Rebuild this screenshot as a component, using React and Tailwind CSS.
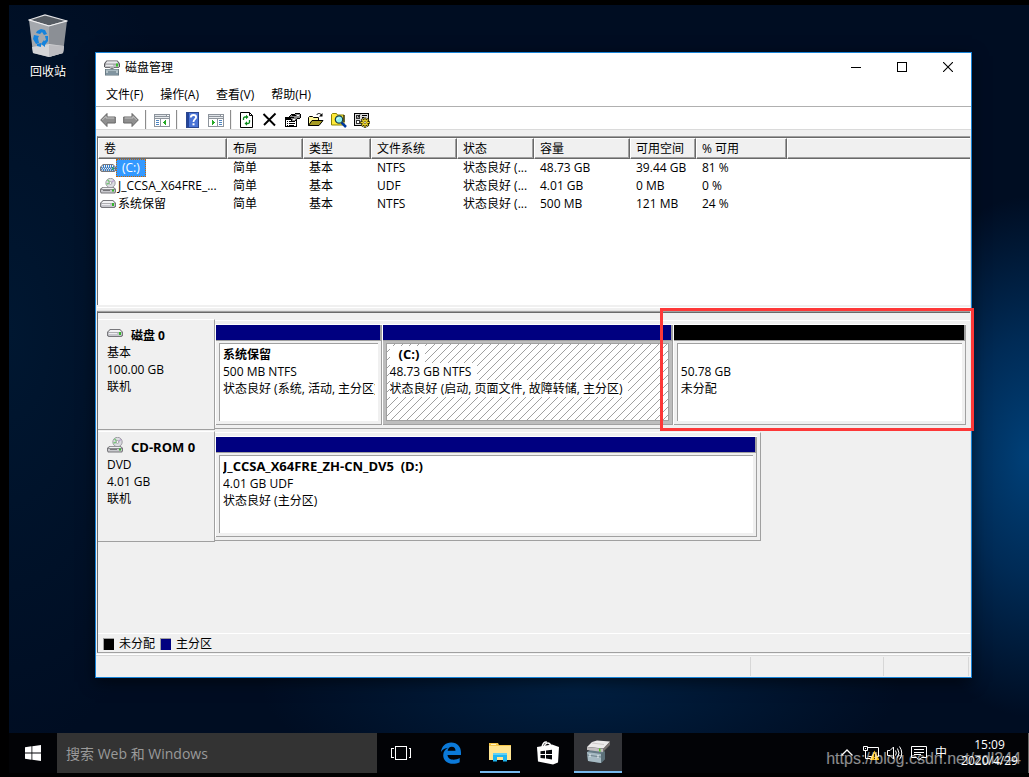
import React, { useState } from "react";

const volumes = [
  { icon: "hatched", name: "(C:)", layout: "简单", type: "基本", fs: "NTFS", status: "状态良好 (...", size: "48.73 GB", free: "39.44 GB", percent: "81 %" },
  { icon: "cd", name: "J_CCSA_X64FRE_...", layout: "简单", type: "基本", fs: "UDF", status: "状态良好 (...", size: "4.01 GB", free: "0 MB", percent: "0 %" },
  { icon: "disk", name: "系统保留", layout: "简单", type: "基本", fs: "NTFS", status: "状态良好 (...", size: "500 MB", free: "121 MB", percent: "24 %" },
];

const columns = [
  { label: "卷", width: "w-[129px]" },
  { label: "布局", width: "w-[76px]" },
  { label: "类型", width: "w-[68px]" },
  { label: "文件系统", width: "w-[86px]" },
  { label: "状态", width: "w-[77px]" },
  { label: "容量", width: "w-[96px]" },
  { label: "可用空间", width: "w-[66px]" },
  { label: "% 可用", width: "w-[91px]" },
];

const menus = ["文件(F)", "操作(A)", "查看(V)", "帮助(H)"];

function DiskIcon({ hatched }) {
  return (
    <svg className="h-4 w-4 shrink-0" viewBox="0 0 16 16">
      <path d="M3 4h10l3 3v3.5L14.500 12h-13L0 10.500V7z" fill="#77777b" />
      <path d="M3.300 5h9.400L15 7.200H1z" fill="#f2f2f4" />
      <path d="M1 7.500h14V10l-1 1H2l-1-1z" fill="#c6c6cc" />
      <path d="M2 8.500h8" stroke="#efeff2" />
      <rect x="12" y="7" width="2" height="3" fill="#35b52d" />
      {hatched && (
        <g stroke="#2f7fd0" strokeDasharray="1 1" shapeRendering="crispEdges">
          <path d="M3 5.500h10M1 7.500h14M1 9.500h14" />
          <path d="M2 6.500h12M1 8.500h15M2 10.500h12" strokeDashoffset="1" />
        </g>
      )}
    </svg>
  );
}

function CdIcon() {
  return (
    <svg className="h-4 w-4 shrink-0" viewBox="0 0 16 16">
      <circle cx="10.500" cy="5" r="4.700" fill="#dcdce2" stroke="#8b8b91" strokeWidth=".8" />
      <path d="M10.500 5L7.500 1.700M10.500 5l-4 1" stroke="#79c77a" strokeWidth="1.400" />
      <path d="M10.500 5l3.500-2.500" stroke="#b99bd0" strokeWidth="1.200" />
      <circle cx="10.500" cy="5" r="1.400" fill="#fff" stroke="#88888d" strokeWidth=".7" />
      <path d="M2.500 9h11l2.500 2v3l-1 1.500H1L0 14v-3z" fill="#77777b" />
      <path d="M3 9.800h10l1.500 1.300h-13z" fill="#efeff1" />
      <path d="M1 11.700h14v2l-.7.800H1.700L1 13.700z" fill="#c9c9ce" />
      <path d="M3 12.500h7" stroke="#77777b" />
      <rect x="12" y="11.500" width="2" height="2" fill="#35b52d" />
    </svg>
  );
}

function ManagementIcon({ className }) {
  return (
    <svg className={className} viewBox="0 0 16 16">
      <path d="M2.500.500h11L16 3.500v3L14.500 8h-13L0 6.500v-3z" fill="#58585c" />
      <path d="M3 1.300h10l1.800 2.400H1.200z" fill="#e9e9ec" />
      <path d="M1 4.300h14v2l-.9.900H1.900L1 6.300z" fill="#bfc0c4" />
      <path d="M2 5.300h7" stroke="#f5f5f6" />
      <rect x="12" y="3.500" width="2" height="3" fill="#39c02b" />
      <path d="M1 9h14v6.500H1z" fill="#5e7078" />
      <path d="M1.700 9.500h12.600v2H1.700z" fill="#a9bac2" />
      <path d="M1.700 12h12.600v3H1.700z" fill="#8094a0" />
      <path d="M3 11v2M13 11v2M6 9V8h4v1" stroke="#e9f0f2" />
    </svg>
  );
}

function TaskbarManagementIcon() {
  return (
    <svg className="h-6 w-6" viewBox="0 0 24 24">
      <path d="M1 12l3-2 14 1 1 8-4 4-13-2z" fill="#667b86" />
      <path d="M1 12l14 2v9L2 21z" fill="#a7bac3" />
      <path d="M15 14l4-3v8l-4 4z" fill="#5c7079" />
      <path d="M1 15l14 2" stroke="#6d818b" />
      <path d="M4 14v3M12 15v3" stroke="#e8eff2" />
      <path d="M6 2l5-1.500 13 1-6 7-17-1.500z" fill="#eceaea" />
      <path d="M1 7l16 1.700V12L1 10z" fill="#c3bfc0" />
      <path d="M17 8.700L24 1.500V5l-7 7z" fill="#77716f" />
      <path d="M6 3l12 1.500" stroke="#cfcaca" />
      <path d="M13 8.500l1.500.200v3L13 11.300z" fill="#4dc71d" />
    </svg>
  );
}

function ArrowIcon({ flip }) {
  return (
    <svg className={flip ? "h-4 w-4 -scale-x-100" : "h-4 w-4"} viewBox="0 0 16 16">
      <path d="M.700 8L7 1.500V5h8.300v6H7v3.500z" fill="#8f8f8f" stroke="#666" />
      <path d="M2.300 8L6 4.300V6h8.300" fill="none" stroke="#c4c4c4" />
    </svg>
  );
}

function PaneIcon({ right }) {
  return (
    <svg className="h-4 w-4" viewBox="0 0 16 16" shapeRendering="crispEdges">
      <rect x="0" y="2" width="16" height="13" fill="#8d949c" />
      <rect x="1" y="3" width="11" height="1" fill="#dfe3e8" />
      <rect x="13" y="3" width="2" height="1" fill="#fff" />
      <rect x="1" y="5" width="14" height="1" fill="#e8ebee" />
      {right ? (
        <>
          <rect x="1" y="7" width="8" height="7" fill="#fff" />
          <rect x="10" y="7" width="5" height="7" fill="#fff" />
          <path d="M4 8v5l3-2.500z" fill="#25a925" />
          <path d="M11 8.500h3M11 10.500h3M11 12.500h3" stroke="#4c84c0" />
        </>
      ) : (
        <>
          <rect x="1" y="7" width="5" height="7" fill="#fff" />
          <rect x="7" y="7" width="8" height="7" fill="#fff" />
          <path d="M12 8v5l-3-2.500z" fill="#25a925" />
          <path d="M2 8.500h3M2 10.500h3M2 12.500h3" stroke="#4c84c0" />
        </>
      )}
    </svg>
  );
}

function HelpIcon() {
  return (
    <svg className="h-4 w-4" viewBox="0 0 16 16">
      <rect x="1.500" y=".5" width="12" height="15" fill="#4a74d6" stroke="#2b478e" />
      <path d="M3 1v14" stroke="#234499" strokeWidth="2" />
      <path d="M5.800 5.500C5.800 3.500 7.100 3 8.500 3c1.600 0 2.600.9 2.600 2.300C11.100 7.200 8.500 7.300 8.500 10" fill="none" stroke="#fff" strokeWidth="1.800" />
      <rect x="7.500" y="11.300" width="2" height="2" fill="#fff" />
    </svg>
  );
}

function RefreshIcon() {
  return (
    <svg className="h-4 w-4" viewBox="0 0 16 16">
      <path d="M1.500.500h9l3 3v12h-12z" fill="#fff" stroke="#000" />
      <path d="M10.500.500v3h3" fill="none" stroke="#000" />
      <path d="M4.500 8V6.500C4.500 5.500 5 5 6 5H7.500M10.500 8v2c0 1-.5 1.500-1.500 1.500H7.500" fill="none" stroke="#0b8a1c" strokeWidth="1.300" />
      <path d="M7 2.700v4.600L9.500 5zM8 9.200v4.600L5.500 11.500z" fill="#0b8a1c" />
    </svg>
  );
}

function DeleteIcon() {
  return (
    <svg className="h-4 w-4" viewBox="0 0 16 16">
      <path d="M1.500 2L13 13.500M13.500 1.500L2 13" stroke="#000" strokeWidth="1.900" />
    </svg>
  );
}

function PropertiesIcon() {
  return (
    <svg className="h-4 w-4" viewBox="0 0 16 16" shapeRendering="crispEdges">
      <path d="M.500 5.500h11v9H.500z" fill="#fff" stroke="#000" />
      <path d="M1 6.500h10" stroke="#000" strokeWidth="2" />
      <path d="M2 9.500h1M4 9.500h6M2 11.500h1M4 11.500h6M2 13.500h1M4 13.500h5" stroke="#000" />
      <path d="M4 5l3-3h3l2-1 3 1v4l-3 1-2 2H7z" fill="#8a8a8a" stroke="#000" />
      <path d="M5 5.500h4M7 3.500h4" stroke="#000" />
      <path d="M12 3.500h2M8 7.500h2" stroke="#fff" />
    </svg>
  );
}

function OpenIcon() {
  return (
    <svg className="h-4 w-4" viewBox="0 0 16 16">
      <path d="M.500 13.500v-8l1-1h3l1 1h5v3" fill="#fff79a" stroke="#000" />
      <path d="M.500 13.500l3.500-5h11l-4 5z" fill="#a59b22" stroke="#000" />
      <path d="M8.500 3c1.500-2 3.500-2 5 0" fill="none" stroke="#000" />
      <path d="M14.500 1v3.500H11z" fill="#000" />
    </svg>
  );
}

function FindIcon() {
  return (
    <svg className="h-4 w-4" viewBox="0 0 16 16">
      <path d="M.500 13V2.500l1-1h4l1 1.500h6.500v10z" fill="#ffea3a" stroke="#8d8500" />
      <path d="M13 3v7" stroke="#000" />
      <path d="M10.500 10.500l4.500 4.500" stroke="#003a9e" strokeWidth="2.500" />
      <circle cx="8" cy="7.500" r="3.700" fill="#8df2f2" stroke="#1a3c4a" strokeWidth="1.200" />
      <path d="M6 7.500L8 5.500" stroke="#fff" />
    </svg>
  );
}

function SettingsIcon() {
  return (
    <svg className="h-4 w-4" viewBox="0 0 16 16">
      <path d="M.500 1.500h14v12H.500z" fill="#dcdcdc" stroke="#000" shapeRendering="crispEdges" />
      <path d="M2.500 3.500h3v3h-3zM2.500 8.500h3v3h-3z" fill="#fff" stroke="#333" shapeRendering="crispEdges" />
      <path d="M3 4.500l1 1 2-3M8 3.500h5M8 5.500h2" fill="none" stroke="#000" />
      <path d="M11 5.500v10.300M6 10.500h10M7.500 7l7 7M14.500 7l-7 7" stroke="#2b2700" strokeWidth="2.600" />
      <circle cx="11" cy="10.500" r="3.600" fill="#2b2700" />
      <path d="M11 6.200v8.800M6.700 10.500h8.700M8 7.500l6 6M14 7.500l-6 6" stroke="#e9d12c" strokeWidth="1.200" />
      <circle cx="11" cy="10.500" r="2.600" fill="#e9d12c" />
      <circle cx="11" cy="10.500" r="1.100" fill="#fff" stroke="#5b5200" strokeWidth=".7" />
    </svg>
  );
}

function RecycleBin() {
  return (
    <button type="button" className="flex w-[78px] flex-col items-center pt-[9px] text-white">
      <svg className="h-11 w-10" viewBox="0 0 40 44">
        <path d="M1 6L17 1l22 6-18 5z" fill="#565c63" stroke="#e3e3e5" strokeWidth="1.200" />
        <path d="M1 6l20 6v31L5 39z" fill="#a4a8ad" />
        <path d="M39 7l-18 5v31l14-4z" fill="#8b8f95" />
        <path d="M4 33l17-3 15 2-1 7-14 4-16-4z" fill="#d4d4d6" />
        <path d="M21 31v12l14-4 1-7z" fill="#bcbcc0" />
        <path d="M1 6l20 6 18-5" fill="none" stroke="#f1f1f2" strokeWidth="1.200" />
        <g fill="#1583dc">
          <path d="M9 17l4-2 4 1 2 4-3 1-2-3-2 2-4-1z" />
          <path d="M6 21l5 1-1 2 1 5-3 1-3-5z" />
          <path d="M17 22l3 0 0 5-3 4v2l-4-3 3-4v1l2-1z" />
          <path d="M9 30l4-1v4l-4-1z" />
        </g>
      </svg>
      <span className="mt-[5px] text-xs leading-[18px] [text-shadow:1px_1px_2px_#000]">回收站</span>
    </button>
  );
}

function ToolButton({ label, children }) {
  return (
    <button type="button" aria-label={label} className="flex h-[22px] w-[23px] items-center justify-center">
      {children}
    </button>
  );
}

function Separator() {
  return <div className="mx-[3px] h-[19px] w-[2px] border-l border-[#8c8c8c] bg-[#f0f0f0]" />;
}

function TitleBar() {
  return (
    <header className="flex h-7 items-center justify-between pl-2">
      <div className="flex items-center gap-[5px] pt-[2px]">
        <ManagementIcon className="h-4 w-4" />
        <h1>磁盘管理</h1>
      </div>
      <div className="flex h-full">
        <button type="button" aria-label="最小化" className="flex w-[46px] items-center justify-center">
          <svg className="h-[10px] w-[10px]" viewBox="0 0 10 10" shapeRendering="crispEdges">
            <path d="M0 5.500h10" stroke="#000" />
          </svg>
        </button>
        <button type="button" aria-label="最大化" className="flex w-[46px] items-center justify-center">
          <svg className="h-[10px] w-[10px]" viewBox="0 0 10 10" shapeRendering="crispEdges">
            <path d="M.500.500h9v9h-9z" fill="none" stroke="#000" />
          </svg>
        </button>
        <button type="button" aria-label="关闭" className="flex w-[46px] items-center justify-center">
          <svg className="h-[10px] w-[10px]" viewBox="0 0 10 10">
            <path d="M0 0l10 10M10 0L0 10" stroke="#000" strokeWidth="1.100" />
          </svg>
        </button>
      </div>
    </header>
  );
}

function Toolbar() {
  return (
    <div className="flex h-[23px] items-center border-b border-[#dadada] pt-[3px]">
      <ToolButton label="后退"><ArrowIcon /></ToolButton>
      <ToolButton label="前进"><ArrowIcon flip /></ToolButton>
      <Separator />
      <ToolButton label="显示控制台树"><PaneIcon /></ToolButton>
      <Separator />
      <ToolButton label="帮助"><HelpIcon /></ToolButton>
      <ToolButton label="显示操作窗格"><PaneIcon right /></ToolButton>
      <Separator />
      <ToolButton label="刷新"><RefreshIcon /></ToolButton>
      <ToolButton label="删除"><DeleteIcon /></ToolButton>
      <ToolButton label="属性"><PropertiesIcon /></ToolButton>
      <ToolButton label="打开"><OpenIcon /></ToolButton>
      <ToolButton label="浏览"><FindIcon /></ToolButton>
      <ToolButton label="设置"><SettingsIcon /></ToolButton>
    </div>
  );
}

function VolumeTable() {
  const [selected, setSelected] = useState(0);

  return (
    <div className="h-[167px] shrink-0 overflow-hidden bg-white">
      <table className="w-full table-fixed border-separate border-spacing-0 text-left">
        <thead>
          <tr className="h-[21px]">
            {columns.map((c) => (
              <th
                key={c.label}
                className={`${c.width} whitespace-nowrap border border-b-[#696969] border-l-white border-r-[#696969] border-t-white bg-[#f0f0f0] p-0 pl-[5px] font-normal leading-[18px] shadow-[inset_-1px_-1px_0_#a0a0a0]`}
              >
                {c.label}
              </th>
            ))}
            <td className="border border-b-[#696969] border-l-white border-r-0 border-t-white bg-[#f0f0f0] p-0 shadow-[inset_0_-1px_0_#a0a0a0]" />
          </tr>
        </thead>
        <tbody>
          {volumes.map((v, i) => (
            <tr key={v.name} onClick={() => setSelected(i)} className="h-[18px] whitespace-nowrap leading-[18px]">
              <td className="p-0 pl-[2px]">
                <div className="flex h-[18px] items-center">
                  {v.icon === "cd" ? <CdIcon /> : <DiskIcon hatched={v.icon === "hatched"} />}
                  <span className={selected === i ? "border border-dotted border-[#cc6600] bg-[#3399ff] px-[5px] leading-4 text-white" : "pl-[2px]"}>
                    {v.name}
                  </span>
                </div>
              </td>
              <td className="p-0 pl-[6px]">{v.layout}</td>
              <td className="p-0 pl-[6px]">{v.type}</td>
              <td className="p-0 pl-[6px]">{v.fs}</td>
              <td className="p-0 pl-[6px]">{v.status}</td>
              <td className="p-0 pl-[6px]">{v.size}</td>
              <td className="p-0 pl-[6px]">{v.free}</td>
              <td className="p-0 pl-[6px]">{v.percent}</td>
              <td />
            </tr>
          ))}
        </tbody>
      </table>
    </div>
  );
}

function Hatch() {
  return (
    <svg className="absolute inset-0 h-full w-full" shapeRendering="crispEdges">
      <defs>
        <pattern id="hatch" width="8" height="8" patternUnits="userSpaceOnUse">
          <path d="M0 7.500h1M1 6.500h1M2 5.500h1M3 4.500h1M4 3.500h1M5 2.500h1M6 1.500h1M7 .5h1" stroke="#a0a0a0" />
        </pattern>
      </defs>
      <rect width="100%" height="100%" fill="url(#hatch)" />
    </svg>
  );
}

function Partition({ title, size, status, grow, barColor = "bg-[#000080]", selected }) {
  const line = selected ? "w-fit bg-white pr-[6px]" : "";

  return (
    <div className={`${grow} flex min-w-0 flex-col border-l border-t border-white`}>
      <div className={`h-[15px] border-r-2 border-[#a0a0a0] ${barColor}`} />
      <div className={`flex flex-1 border-b border-r border-t border-[#a0a0a0] pb-[3px] pl-[3px] pr-[3px] pt-[2px] ${selected ? "bg-[#bdbdbd]" : "bg-[#f0f0f0]"}`}>
        <div className={`relative min-w-0 flex-1 bg-white px-[3px] pt-[2px] ${selected ? "border border-[#a0a0a0]" : "border-l border-t border-[#a0a0a0]"}`}>
          {selected && <Hatch />}
          <div className="relative overflow-hidden whitespace-nowrap leading-[17px]">
            <p className={`h-[17px] font-bold ${line} ${selected ? "pl-[9px]" : ""}`}>{title}</p>
            <p className={line}>{size}</p>
            <p className={line}>{status}</p>
          </div>
        </div>
      </div>
    </div>
  );
}

function DiskRow({ icon, name, type, size, state, children }) {
  return (
    <section className="mb-px flex h-[111px]">
      <div className="w-[117px] shrink-0 border-b border-r border-t border-b-[#a0a0a0] border-r-[#a0a0a0] border-t-white pl-[9px] pt-[7px] leading-[17px]">
        <h2 className="flex h-[17px] items-center gap-2 whitespace-nowrap font-bold">
          <span className="-mt-[6px]">{icon}</span>
          {name}
        </h2>
        <p>{type}</p>
        <p>{size}</p>
        <p>{state}</p>
      </div>
      <div className="flex min-w-0 flex-1 pb-px pt-px">{children}</div>
    </section>
  );
}

function GraphView() {
  return (
    <div className="flex min-h-0 flex-1 flex-col border-b border-l border-t border-b-[#a0a0a0] border-l-[#696969] border-t-[#a0a0a0]">
      <div className="flex flex-1 flex-col border-t border-[#696969] pt-[6px]">
        <DiskRow icon={<DiskIcon />} name="磁盘 0" type="基本" size="100.00 GB" state="联机">
          <div className="flex min-w-0 flex-1 border-b border-t border-b-[#a0a0a0] border-t-white pb-[3px] pr-1 pt-[3px]">
            <Partition grow="flex-[166]" title="系统保留" size="500 MB NTFS" status="状态良好 (系统, 活动, 主分区)" />
            <Partition grow="flex-[291]" selected title={<span className="text-[13px]">(C:)</span>} size="48.73 GB NTFS" status="状态良好 (启动, 页面文件, 故障转储, 主分区)" />
            <Partition grow="flex-[293]" barColor="bg-black" size="50.78 GB" status="未分配" />
          </div>
        </DiskRow>
        <DiskRow icon={<CdIcon />} name={<span className="text-[13px]">CD-ROM 0</span>} type="DVD" size="4.01 GB" state="联机">
          <div className="flex min-w-0 flex-[544] border-b border-r border-t border-b-[#a0a0a0] border-r-[#a0a0a0] border-t-white pb-[3px] pr-[3px] pt-[3px]">
            <Partition
              grow="flex-1"
              title={<span className="text-[13px]">J_CCSA_X64FRE_ZH-CN_DV5 &nbsp;(D:)</span>}
              size="4.01 GB UDF"
              status="状态良好 (主分区)"
            />
          </div>
          <div className="flex-[210]" />
        </DiskRow>
        <div className="mt-auto flex h-[19px] items-center gap-[5px] border-t border-white pl-[5px] pt-px leading-[18px]">
          <span className="h-3 w-[11px] border-l border-t border-[#a0a0a0] bg-black" />
          <span>未分配</span>
          <span className="h-3 w-[11px] border-l border-t border-[#a0a0a0] bg-[#000080]" />
          <span>主分区</span>
        </div>
      </div>
    </div>
  );
}

function StatusBar() {
  return (
    <footer className="flex h-[22px] shrink-0 border-t border-[#d7d7d7] py-px pr-[2px]">
      <div className="flex-1 border-r border-[#d7d7d7]" />
      <div className="w-[133px] border-r border-[#d7d7d7]" />
      <div className="w-[85px] border-r border-[#d7d7d7]" />
    </footer>
  );
}

function DiskManagement() {
  return (
    <main className="absolute bottom-[55px] left-[86px] right-[57px] top-[47px] flex flex-col border border-[#1883d7] bg-[#f0f0f0] text-black shadow-[0_4px_14px_rgba(0,0,0,0.5)]">
      <div className="shrink-0 bg-white">
        <TitleBar />
        <nav className="flex h-[26px] items-center gap-px border-b border-[#b0b0b0] pl-[2px] pt-[2px]">
          {menus.map((m) => (
            <button key={m} type="button" className="px-2 leading-[18px]">
              {m}
            </button>
          ))}
        </nav>
        <Toolbar />
      </div>
      <div className="mt-[6px] flex min-h-0 flex-1 flex-col border-r border-[#e3e3e3] pl-px">
        <div className="border-l border-t border-l-[#696969] border-t-[#a0a0a0]">
          <div className="border-t border-[#696969]">
            <VolumeTable />
          </div>
        </div>
        <div className="h-[6px] shrink-0 border-b border-[#e3e3e3] pt-[2px]">
          <div className="h-px bg-white" />
        </div>
        <GraphView />
      </div>
      <div className="h-[2px] shrink-0 border-b border-white" />
      <StatusBar />
      {/* highlight round the unallocated space */}
      <div className="pointer-events-none absolute -right-[3px] left-[564px] top-[255px] h-[123px] border-[3px] border-[#fd3838]" />
    </main>
  );
}

function Taskbar() {
  return (
    <footer className="relative flex h-10 shrink-0 items-stretch bg-[#020306] text-white">
      <button type="button" aria-label="开始" className="flex w-12 items-center justify-center">
        <svg className="h-4 w-4" viewBox="0 0 16 16" fill="#fff">
          <path d="M0 2.200l6.500-.9v6.200H0zM7.300 1.200L16 0v7.500H7.300zM0 8.400h6.500v6.300L0 13.800zM7.300 8.400H16V16l-8.700-1.200z" />
        </svg>
      </button>
      <input
        type="text"
        aria-label="搜索"
        placeholder="搜索 Web 和 Windows"
        className="w-80 bg-[#333333] px-[9px] pt-[2px] text-sm outline-none placeholder:text-[#9a9a9a]"
      />
      <button type="button" aria-label="任务视图" className="flex w-12 items-center justify-center">
        <svg className="h-[14px] w-5" viewBox="0 0 20 14" fill="none" stroke="#fff" shapeRendering="crispEdges">
          <path d="M4.500.500h11v13h-11zM2.500 2.500h-2v9h2M17.500 2.500h2v9h-2" />
        </svg>
      </button>
      <button type="button" aria-label="Edge" className="flex w-[51px] items-center justify-center">
        <svg className="h-[22px] w-[22px]" viewBox="0 0 22 22">
          <path
            d="M1 10C1.500 4.500 5.500.500 11.200.500 17.500.500 21 5 21 10.500V13H7.500c.2 3 2.700 4.700 6 4.700 2.300 0 4.300-.6 6.200-1.700v4.200c-2 1.100-4.500 1.600-7 1.600-6 0-9.500-3.700-9.500-8.500 0-3.500 2-6.300 5-7.600C5 6 2.600 7.500 1 10zm6.600-1.200h7.900c0-2.600-1.400-4.100-3.700-4.100-2.200 0-3.800 1.600-4.200 4.100z"
            fill="#0b7ad9"
          />
        </svg>
      </button>
      <button type="button" aria-label="文件资源管理器" className="flex w-12 flex-col items-center justify-end">
        <svg className="mb-[9px] h-5 w-[22px]" viewBox="0 0 22 20">
          <path d="M0 1h9l1 2h12v15H0z" fill="#f5c64a" />
          <path d="M2 2h5v1H2z" fill="#fff4c4" />
          <path d="M0 4h22v14H0z" fill="#ffe491" />
          <path d="M4 11h14v8.500h-4V15H8v4.500H4z" fill="#1db4f0" />
          <path d="M4 11h14v2H4z" fill="#5fd0f5" />
        </svg>
        <span className="h-[2px] w-10 bg-[#76b9ed]" />
      </button>
      <button type="button" aria-label="应用商店" className="flex w-12 items-center justify-center">
        <svg className="h-6 w-[22px]" viewBox="0 0 22 24">
          <path d="M5 6C6 2 8 .800 10 1.200M7 6c1-4 5-6 7-1" fill="none" stroke="#fff" strokeWidth="1.500" />
          <path d="M0 6l15-2.500L22 6l-1 15.500-5 2L1 20.500z" fill="#fff" />
          <path d="M3.500 10.300l4.500-.6V13H3.500zM9 9.500l6-.8V13H9zM3.500 14H8v3.500l-4.500-.6zM9 14h6v4.400l-6-.8z" fill="#05070b" />
        </svg>
      </button>
      <button type="button" aria-label="磁盘管理" className="ml-[2px] flex w-12 flex-col items-center justify-end bg-[#333438]">
        <span className="mb-[7px]"><TaskbarManagementIcon /></span>
        <span className="h-[2px] w-full bg-[#76b9ed]" />
      </button>

      <div className="ml-auto flex items-center gap-2">
        <button type="button" aria-label="显示隐藏的图标">
          <svg className="h-4 w-4" viewBox="0 0 16 16" fill="none" stroke="#fff" strokeWidth="1.300">
            <path d="M2.500 10.500L8 5l5.500 5.500" />
          </svg>
        </button>
        <button type="button" aria-label="网络">
          <svg className="h-4 w-4" viewBox="0 0 16 16" fill="none" stroke="#fff">
            <path d="M4.500 2.500h11v9h-10M.500 1.500h4v4h-4zM2.500 5.500v8h5M3 3.500H2" />
            <path d="M11.500 5.500l5 9.500h-10z" fill="#fbbc14" stroke="none" />
            <path d="M11.500 9v3M11.500 13v1" stroke="#3f3000" />
          </svg>
        </button>
        <button type="button" aria-label="音量">
          <svg className="h-4 w-4" viewBox="0 0 16 16" fill="none" stroke="#fff">
            <path d="M.500 5.500h2.500L6.500 2v12L3 10.500H.500z" />
            <path d="M8.500 5.500q1.700 2.500 0 5M10.500 3.500q3 4.500 0 9M12.500 1.500q4.500 6.500 0 13" />
          </svg>
        </button>
        <button type="button" aria-label="通知">
          <svg className="h-4 w-4" viewBox="0 0 16 16" fill="none" stroke="#fff">
            <path d="M.500 1.500h15v11h-5L8 15.500l-2.500-3h-5zM3 4.500h10M3 7.500h10M3 9.500h7" />
          </svg>
        </button>
        <button type="button" className="text-xs leading-4">中</button>
        <time className="flex h-full w-[73px] flex-col items-center justify-center pr-1 text-xs leading-4">
          <span>15:09</span>
          <span>2020/4/29</span>
        </time>
      </div>
      <div className="w-px bg-[#6a6a6a]" />
      <span className="pointer-events-none absolute right-2 top-[14px] font-['Liberation_Sans'] text-base leading-6 text-white/55">
        https://blog.csdn.net/zdl244
      </span>
    </footer>
  );
}

export default function App() {
  return (
    <div className="flex h-screen min-h-[560px] flex-col bg-black pb-1 pl-[9px] pt-[5px] font-['Open_Sans','Noto_Sans_CJK_SC',sans-serif] text-xs">
      <div className="relative flex-1 bg-[#000d22] bg-[radial-gradient(ellipse_150px_260px_at_100%_62%,#004078_0%,#002b56_45%,transparent_100%),radial-gradient(ellipse_320px_120px_at_56%_93%,#002042_0%,transparent_100%),radial-gradient(ellipse_200px_420px_at_0%_45%,#001731_0%,transparent_100%)]">
        <RecycleBin />
        <DiskManagement />
      </div>
      <Taskbar />
    </div>
  );
}
